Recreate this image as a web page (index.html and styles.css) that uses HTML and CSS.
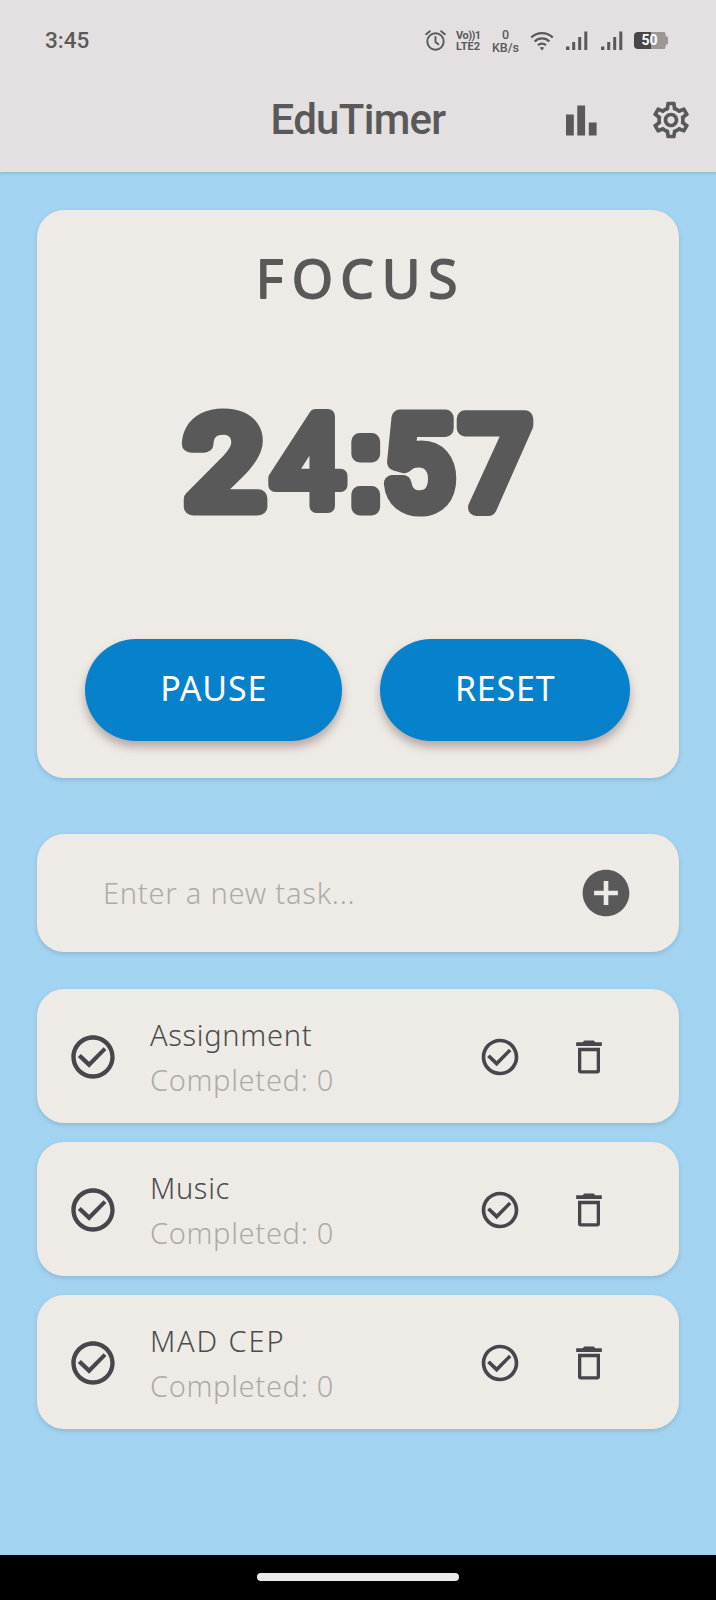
FILE: index.html
```html
<!DOCTYPE html>
<html lang="en">
<head>
<meta charset="utf-8">
<title>EduTimer</title>
<link rel="stylesheet" href="styles.css">
</head>
<body>
<svg class="defs" width="0" height="0">
  <symbol id="check" viewBox="0 0 24 24"><path d="M12 2C6.480 2 2 6.480 2 12s4.480 10 10 10 10-4.480 10-10S17.520 2 12 2zm0 18c-4.410 0-8-3.590-8-8s3.590-8 8-8 8 3.590 8 8-3.590 8-8 8zM6.400 10.600L10.200 14.200L16.900 7.500L18.200 8.800L10.200 17L5 12z"/></symbol>
  <symbol id="trash" viewBox="0 0 24 24"><path d="M6 19.500c0 .9.600 1.500 1.500 1.500h9c.9 0 1.500-.6 1.500-1.500V7H6v12.500zM7.800 8.800h8.400v10.400H7.800V8.800zM15.500 4l-1-1h-5l-1 1H5v2h14V4h-3.500z"/></symbol>
  <symbol id="signal" viewBox="0 0 22 20"><path d="M0 15.500h3.400V19H0zM6.200 11h3V19h-3zM12.200 6h3V19h-3zM18.300.5h3V19h-3z"/></symbol>
</svg>
<div class="screen">
  <header class="header">
    <div class="status">
      <span class="clock">3:45</span>
      <div class="indicators">
        <svg class="alarm" viewBox="0 0 21 21"><g fill="none" stroke="currentColor" stroke-width="1.900" stroke-linecap="round"><circle cx="10.500" cy="11.500" r="8.200"/><path d="M10.500 7v5l2.800 2.300M1.200 4.200l3.600-3M19.800 4.200l-3.600-3"/></g></svg>
        <div class="volte"><span class="vo">Vo))1</span><span>LTE2</span></div>
        <div class="speed"><span>0</span><span>KB/s</span></div>
        <svg class="wifi" viewBox="0 0 24 20"><g fill="none" stroke="currentColor" stroke-width="2.300"><path d="M1.200 6.500a15.500 15.500 0 0 1 21.600 0M4.600 10.500a10.500 10.500 0 0 1 14.800 0M8 14.300a5.700 5.700 0 0 1 8 0"/></g><path d="M9.800 16.800q2.200-1.500 4.400 0L12 19.500z"/></svg>
        <svg class="signal"><use href="#signal"/></svg>
        <svg class="signal second"><use href="#signal"/></svg>
        <div class="battery"><span>50</span></div>
      </div>
    </div>
    <div class="appbar">
      <h1 class="title">EduTimer</h1>
      <div class="actions">
        <svg class="bars" viewBox="0 0 31 31"><path d="M0 9.500h7.800v21H0zM11.300.5h7.800v30h-7.800zM22.800 17.500h7.800v13h-7.800z"/></svg>
        <svg class="gear" viewBox="0 0 24 24"><path d="M19.430 12.980c.04-.32.07-.64.07-.98 0-.34-.03-.66-.07-.98l2.110-1.650c.19-.15.24-.42.12-.64l-2-3.460c-.09-.16-.26-.25-.44-.25-.06 0-.12.010-.17.030l-2.490 1c-.52-.4-1.080-.73-1.690-.98l-.38-2.650C14.460 2.180 14.250 2 14 2h-4c-.25 0-.46.18-.49.42l-.38 2.650c-.61.25-1.170.59-1.690.98l-2.490-1c-.06-.02-.12-.03-.18-.03-.17 0-.34.09-.43.25l-2 3.460c-.13.22-.07.49.12.64l2.110 1.650c-.04.32-.07.65-.07.98 0 .33.03.66.07.98l-2.110 1.650c-.19.15-.24.42-.12.64l2 3.460c.09.16.26.25.44.25.06 0 .12-.01.17-.03l2.490-1c.52.4 1.080.73 1.690.98l.38 2.650c.03.24.24.42.49.42h4c.25 0 .46-.18.49-.42l.38-2.650c.61-.25 1.170-.59 1.690-.98l2.490 1c.06.02.12.03.18.03.17 0 .34-.09.43-.25l2-3.460c.12-.22.07-.49-.12-.64l-2.110-1.650zm-1.980-1.710c.04.31.05.52.05.73 0 .21-.02.43-.05.73l-.14 1.130.89.7 1.080.84-.7 1.210-1.270-.51-1.040-.42-.9.680c-.43.32-.84.56-1.250.73l-1.060.43-.16 1.130-.2 1.350h-1.400l-.19-1.350-.16-1.130-1.060-.43c-.43-.18-.83-.41-1.230-.71l-.91-.7-1.060.43-1.270.51-.7-1.210 1.080-.84.89-.7-.14-1.130c-.03-.31-.05-.54-.05-.74s.02-.43.05-.73l.14-1.130-.89-.7-1.080-.84.7-1.210 1.270.51 1.040.42.9-.68c.43-.32.84-.56 1.250-.73l1.060-.43.16-1.130.2-1.350h1.390l.19 1.350.16 1.130 1.060.43c.43.18.83.41 1.230.71l.91.7 1.060-.43 1.270-.51.7 1.210-1.070.85-.89.7.14 1.130zM12 8c-2.210 0-4 1.790-4 4s1.790 4 4 4 4-1.790 4-4-1.790-4-4-4zm0 6c-1.100 0-2-.9-2-2s.9-2 2-2 2 .9 2 2-.9 2-2 2z"/></svg>
      </div>
    </div>
  </header>
  <main class="content">
    <section class="card timer">
      <svg class="readout" viewBox="0 0 641 330">
        <text class="mode" y="87.500" x="219 255 303.500 345 391.500">FOCUS</text>
        <text class="time" y="297" x="148" textLength="78" lengthAdjust="spacingAndGlyphs">2</text>
        <text class="time four" y="296" x="235">4</text>
        <text class="time colon" y="297" x="311.500">:</text>
        <text class="time" y="297" x="346">5</text>
        <text class="time" y="297" x="423.500">7</text>
      </svg>
      <div class="controls">
        <button class="btn pause">PAUSE</button>
        <button class="btn reset">RESET</button>
      </div>
    </section>
    <section class="card entry">
      <span class="placeholder">Enter a new task...</span>
      <svg class="add" viewBox="0 0 24 24"><path d="M12 2C6.480 2 2 6.480 2 12s4.480 10 10 10 10-4.480 10-10S17.520 2 12 2zm5.100 11h-4.100v4.100h-2V13H6.900v-2H11V6.900h2V11h4.100v2z"/></svg>
    </section>
    <section class="tasks">
      <article class="card task">
        <svg class="lead"><use href="#check"/></svg>
        <div class="info"><span class="name">Assignment</span><span class="count">Completed: 0</span></div>
        <svg class="done"><use href="#check"/></svg>
        <svg class="delete"><use href="#trash"/></svg>
      </article>
      <article class="card task">
        <svg class="lead"><use href="#check"/></svg>
        <div class="info"><span class="name">Music</span><span class="count">Completed: 0</span></div>
        <svg class="done"><use href="#check"/></svg>
        <svg class="delete"><use href="#trash"/></svg>
      </article>
      <article class="card task">
        <svg class="lead"><use href="#check"/></svg>
        <div class="info"><span class="name caps">MAD CEP</span><span class="count">Completed: 0</span></div>
        <svg class="done"><use href="#check"/></svg>
        <svg class="delete"><use href="#trash"/></svg>
      </article>
    </section>
  </main>
  <footer class="navbar"><div class="handle"></div></footer>
</div>
</body>
</html>
```

FILE: styles.css
```css
* { box-sizing: border-box; }
body { margin: 0; font-family: Roboto, sans-serif; color: #595959; }
svg { display: block; flex: none; fill: currentColor; }
.defs { position: absolute; }
.screen { width: 716px; height: 1600px; display: flex; flex-direction: column; background: #a2d3f0; }

.header { height: 172px; background: #e4e0e1; box-shadow: 0 1px 3px rgba(60, 80, 100, .25); }
.status { height: 81px; padding: 0 48px 0 45px; display: flex; align-items: center; justify-content: space-between; }
.clock { font-size: 22.500px; font-weight: 500; line-height: 28px; position: relative; top: -1px; }
.indicators { display: flex; align-items: center; }
.alarm { width: 21px; height: 21px; margin-right: 10px; }
.volte, .speed { display: flex; flex-direction: column; font-weight: 700; font-size: 11px; line-height: 11px; white-space: nowrap; }
.volte { width: 27px; margin-right: 8px; }
.vo { letter-spacing: -.5px; }
.speed { width: 29px; align-items: center; font-size: 12.500px; line-height: 13px; font-weight: 500; margin-right: 10px; }
.wifi { width: 24px; height: 20px; margin-right: 12px; }
.signal { width: 22px; height: 20px; }
.signal.second { margin: 0 11px 0 13px; }
.battery { width: 34px; height: 17px; border-radius: 4px; text-align: center; color: #fff; font-size: 14px; font-weight: 700; line-height: 17px; padding-right: 3px; background: linear-gradient(90deg, #4a4647 50%, #9b9798 50%); clip-path: polygon(0 0, 91% 0, 94% 25%, 100% 30%, 100% 70%, 94% 75%, 91% 100%, 0 100%); }

.appbar { height: 78px; display: grid; grid-template-columns: 1fr auto 1fr; align-items: center; padding: 0 23px; }
.title { grid-column: 2; margin: 0; font-size: 42px; font-weight: 500; line-height: 50px; letter-spacing: -.7px; }
.actions { display: flex; align-items: center; justify-content: flex-end; gap: 52px; }
.bars { width: 31px; height: 31px; }
.gear { width: 44px; height: 44px; }

.content { flex: 1; padding: 37.500px 37.500px 0 37.400px; }
.card { background: #eeebe6; border-radius: 27px; box-shadow: 0 2px 4px rgba(60, 80, 100, .2); }
.timer { height: 568.500px; }
.readout { width: 641px; height: 330px; }
.mode { font: 400 52.500px "Open Sans", sans-serif; stroke: currentColor; stroke-width: 2px; stroke-linejoin: round; }
.time { font: 400 124px Roboto, sans-serif; stroke: currentColor; stroke-width: 17px; stroke-linejoin: round; }
.four { font-size: 127px; stroke-width: 14px; }
.colon { font-family: "Liberation Sans", sans-serif; }
.controls { display: flex; gap: 38px; padding: 99px 0 0 48px; }
.btn { height: 102.500px; border: 0; border-radius: 52px; background: #0681cc; color: #fff; font: 450 34px "Noto Sans", sans-serif; letter-spacing: .8px; box-shadow: 0 6px 10px rgba(80, 50, 50, .36); padding: 0 0 3px; }
.pause { width: 256.500px; }
.reset { width: 250.500px; }

.entry { height: 118px; margin-top: 56px; display: flex; align-items: center; justify-content: space-between; padding: 0 44.500px 0 65.500px; }
.placeholder { font: 350 29px "Noto Sans", sans-serif; letter-spacing: .8px; color: #ababab; padding-bottom: 2px; }
.add { width: 56px; height: 56px; }

.tasks { display: flex; flex-direction: column; gap: 18.700px; margin-top: 37px; }
.task { height: 134.300px; display: flex; align-items: center; padding: 1px 0 0 29.500px; color: #49454c; }
.lead { width: 52px; height: 52px; margin-right: 31px; }
.info { width: 328px; display: flex; flex-direction: column; font: 350 29px/45px "Noto Sans", sans-serif; letter-spacing: .7px; white-space: nowrap; }
.name { color: #4c4c4c; }
.caps { letter-spacing: 1.900px; }
.count { color: #ababab; }
.done { width: 44px; height: 44px; margin-right: 45px; }
.delete { width: 44px; height: 44px; }

.navbar { height: 45px; background: #000; padding-top: 18px; }
.handle { width: 202px; height: 8px; margin: 0 auto; border-radius: 4px; background: #ece9ea; }
```
